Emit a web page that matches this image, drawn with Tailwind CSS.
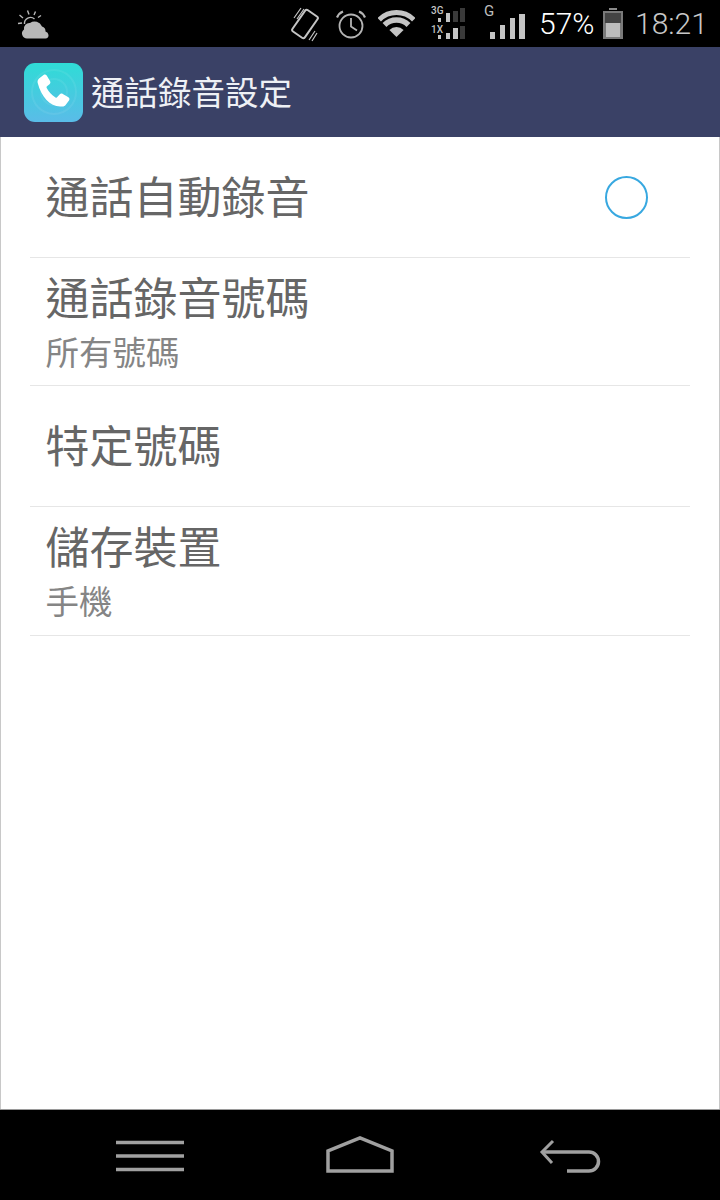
<!DOCTYPE html>
<html lang="en">

<head>
    <meta charset="UTF-8">
    <meta name="viewport" content="width=device-width, initial-scale=1.0">
    <title>通話錄音設定</title>
    <script src="https://cdn.jsdelivr.net/npm/@tailwindcss/browser@4"></script>
</head>

<body class="bg-black font-['Noto_Sans_CJK_TC','Noto_Sans_CJK_JP',sans-serif]">
    <div class="w-[720px] h-[1200px] flex flex-col overflow-hidden">
        <!-- Status bar -->
        <div class="h-[47px] shrink-0 bg-black flex items-center pl-[17px]">
            <svg class="w-[33px] h-[30px]" viewBox="0 0 33 30">
                <g stroke="#b8b8b8" stroke-width="1.4" fill="none">
                    <path d="M1 14.500l4-.5M2.500 6l3.500 3M10.500 1.500l1.500 4M18.500 2.500l-1.500 3.500M24 6.500l-3 2" />
                    <path d="M7.500 15a6 6 0 0 1 10-5" />
                </g>
                <path fill="#b8b8b8" d="M10 29.500a5 5 0 0 1-3-9 5.500 5.500 0 0 1 6-6.500 8 8 0 0 1 12 3.500 5 5 0 0 1 3.500 5 4 4 0 0 1 3 3.500 3 3 0 0 1-3 3.500z" />
            </svg>
            <!-- Vibrate -->
            <svg class="ml-[241px] w-[28px] h-[36px]" viewBox="0 0 28 36" fill="none" stroke="#c4c4c4">
                <rect x="6.500" y="5" width="15" height="26" rx="2" stroke-width="2" transform="rotate(35 14 18)" />
                <path stroke-width="1.200" d="M3 12 10 2M6 13l7-10M18 34l6-9M21 35l5-8" />
            </svg>
            <!-- Alarm -->
            <svg class="ml-[16px] w-[32px] h-[32px]" viewBox="0 0 32 32" fill="none" stroke="#b4b4b4">
                <circle cx="16" cy="18" r="11.500" stroke-width="1.800" />
                <path stroke-width="1.800" d="M16 10v8.500l6 4" />
                <path stroke-width="2.200" d="M2 9.500C3.500 6 5.500 4.500 8 3.500M30 9.500C28.500 6 26.500 4.500 24 3.500" />
            </svg>
            <!-- Wifi -->
            <svg class="ml-[11px] w-[37px] h-[28px]" viewBox="0 0 37 28">
                <g fill="none" stroke="#c4c4c4">
                    <path stroke-width="5" d="M1.200 9.700A24.500 24.500 0 0 1 35.800 9.700" />
                    <path stroke-width="5.500" d="M6.500 15A17 17 0 0 1 30.500 15" />
                </g>
                <path fill="#c4c4c4" d="M18.500 27 11.400 19.900A10 10 0 0 1 25.600 19.900z" />
            </svg>
            <!-- 3G / 1X signal -->
            <div class="relative ml-[16px] w-[35px] h-[47px]">
                <span class="absolute left-0 top-[5px] text-[10px] leading-[12px] font-medium text-[#c4c4c4] font-['Roboto',sans-serif]">3G</span>
                <span class="absolute left-0 top-[24px] text-[10px] leading-[12px] font-medium text-[#c4c4c4] font-['Roboto',sans-serif]">1X</span>
                <svg class="absolute left-0 top-0 w-[35px] h-[47px]" viewBox="0 0 35 47">
                    <path fill="#c4c4c4" d="M7 18h3v4H7zM15 13h4v9h-4zM7 35h3v4H7zM15 33h4v6h-4zM22 28h5v11h-5z" />
                    <path fill="#3a3a3a" d="M22 11h5v11h-5zM29 8h5v14h-5zM29 26h5v13h-5z" />
                </svg>
            </div>
            <!-- G signal -->
            <div class="relative ml-[18px] w-[42px] h-[47px]">
                <span class="absolute left-0 top-[2px] text-[15px] leading-[18px] text-[#bdbdbd] font-['Roboto',sans-serif]">G</span>
                <svg class="absolute left-0 top-0 w-[42px] h-[47px]" viewBox="0 0 42 47">
                    <path fill="#c4c4c4" d="M6 32h5v7H6zM16 25h5v14h-5zM26 18h5v21h-5zM35 14h6v25h-6z" />
                </svg>
            </div>
            <span class="ml-[13px] w-[64px] shrink-0 text-[30px] leading-[47px] font-light text-white font-['Roboto',sans-serif]">57%</span>
            <!-- Battery -->
            <svg class="w-[20px] h-[31px]" viewBox="0 0 20 31">
                <path fill="#8a8a8a" d="M6 0h8v2H6z" />
                <path fill="#7a7a7a" d="M0 3h20v28H0z" />
                <path fill="#444444" d="M2 5h16v10H2z" />
                <path fill="#bcbcbc" d="M3 15h14v14H3z" />
            </svg>
            <span class="ml-[12px] text-[30px] leading-[47px] font-light text-[#c8c8c8] font-['Roboto',sans-serif]">18:21</span>
        </div>

        <!-- App bar -->
        <div class="h-[90px] shrink-0 bg-[#3a4166] flex items-center pl-[24px]">
            <svg class="w-[59px] h-[59px]" viewBox="0 0 59 59">
                <defs>
                    <linearGradient id="appIcon" x1="0" y1="0" x2="0" y2="1">
                        <stop offset="0" stop-color="#2fdcd6" />
                        <stop offset="1" stop-color="#5abce8" />
                    </linearGradient>
                </defs>
                <rect width="59" height="59" rx="11" fill="url(#appIcon)" />
                <g fill="none" stroke="#ffffff" stroke-opacity="0.07" stroke-width="2">
                    <circle cx="30" cy="29" r="13" />
                    <circle cx="30" cy="29" r="22" />
                </g>
                <path fill="#ffffff" d="M15 15.500 19.500 12c1.200-.8 2.400-.6 3.200.6l3.300 5.400c.7 1.200.5 2.300-.5 3.200l-2.500 2.100c-.6.500-.7 1.100-.3 1.800 2 3.800 5 7 8.800 9.300.7.400 1.300.3 1.800-.3l2.300-2.600c.9-1 2-1.200 3.200-.5l5.600 3.300c1.200.8 1.400 2 .6 3.200l-3.400 4.500c-1 1.200-2.300 1.700-3.900 1.400C27 44.500 17.500 34.500 13.700 20c-.4-1.800.1-3.400 1.300-4.500z" />
            </svg>
            <h1 class="ml-[8px] -mt-[3px] text-[33.5px] leading-[44px] text-[#eef0f5]">通話錄音設定</h1>
        </div>

        <!-- Settings list -->
        <div class="flex-1 bg-white border-x border-[#c8c8c8] px-[29px]">
            <div class="h-[121px] border-b border-[#e6e6e6] flex items-center justify-between pr-[42px] pl-[15.5px]">
                <span class="text-[44px] leading-[60px] text-[#666666] -mt-[4px]">通話自動錄音</span>
                <span class="w-[43px] h-[43px] rounded-full border-2 border-[#38a8e0]"></span>
            </div>
            <div class="h-[128px] border-b border-[#e6e6e6] flex flex-col pl-[15.5px] pt-[8px]">
                <span class="text-[44px] leading-[60px] text-[#666666]">通話錄音號碼</span>
                <span class="text-[33.5px] leading-[44px] text-[#858585] mt-[3px]">所有號碼</span>
            </div>
            <div class="h-[121px] border-b border-[#e6e6e6] flex items-center pl-[15.5px]">
                <span class="text-[44px] leading-[60px] text-[#666666] -mt-[4px]">特定號碼</span>
            </div>
            <div class="h-[129px] border-b border-[#e6e6e6] flex flex-col pl-[15.5px] pt-[8px]">
                <span class="text-[44px] leading-[60px] text-[#666666]">儲存裝置</span>
                <span class="text-[33.5px] leading-[44px] text-[#858585] mt-[3px]">手機</span>
            </div>
        </div>

        <!-- Navigation bar -->
        <div class="h-[91px] shrink-0 bg-black border-t border-[#9a9a9a]">
            <svg class="w-[720px] h-[90px]" viewBox="0 0 720 90" fill="none" stroke="#a0a0a0">
                <path stroke-width="3.500" d="M116 32.500h68M116 46h68M116 59.500h68" />
                <path stroke-width="3.500" d="M328 61V41L360 28 392 41V61z" />
                <path stroke-width="3" d="M553 31 542 42l10 11" />
                <path stroke-width="3.500" d="M542 42h47a9.500 9.500 0 0 1 0 19h-22" />
            </svg>
        </div>
    </div>
</body>

</html>
